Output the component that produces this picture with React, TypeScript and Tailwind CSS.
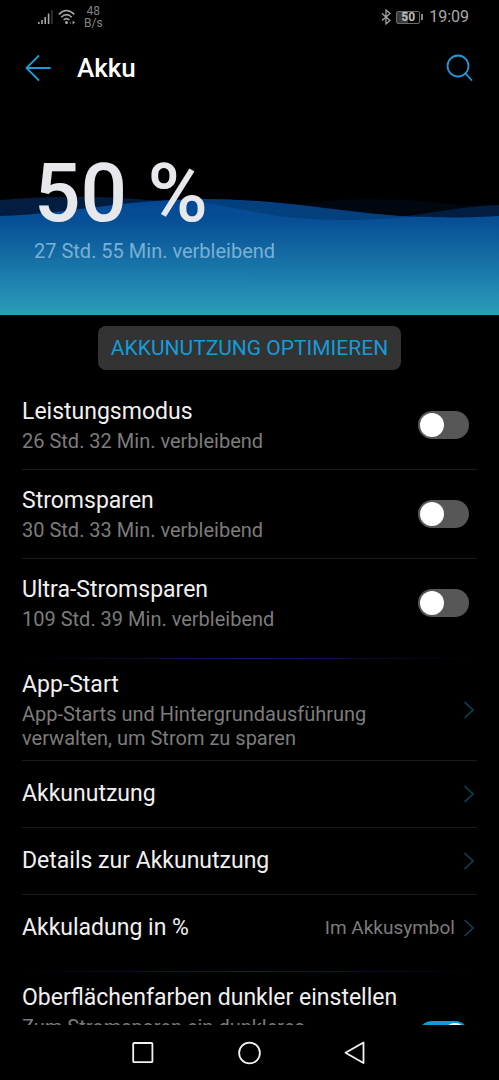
import React from "react";

interface ModeItem {
  id: string;
  title: string;
  remaining: string;
}

interface LinkItem {
  title: string;
  value?: string;
}

const modes: ModeItem[] = [
  { id: "performance", title: "Leistungsmodus", remaining: "26 Std. 32 Min. verbleibend" },
  { id: "saving", title: "Stromsparen", remaining: "30 Std. 33 Min. verbleibend" },
  { id: "ultra", title: "Ultra-Stromsparen", remaining: "109 Std. 39 Min. verbleibend" },
];

const links: LinkItem[] = [
  { title: "Akkunutzung" },
  { title: "Details zur Akkunutzung" },
  { title: "Akkuladung in %", value: "Im Akkusymbol" },
];

const titleClass = "block text-[23px] leading-[30px] text-[#f0f0f0]";
const subClass = "mt-0.5 block text-[20px] leading-6 text-[#7c7c7c]";

const Chevron = () => (
  <svg className="mr-0.5 h-5 w-3 shrink-0" viewBox="0 0 12 20" fill="none" stroke="#0b4355" strokeWidth="1.6">
    <path d="M1.5 2 L10 10 L1.5 18" />
  </svg>
);

const Toggle = ({ id, on }: { id: string; on?: boolean }) => (
  <input
    id={id}
    type="checkbox"
    role="switch"
    defaultChecked={on}
    className="mr-2 h-7 w-[51px] shrink-0 cursor-pointer appearance-none rounded-full bg-[#575757] p-0.5 before:block before:size-6 before:rounded-full before:bg-white checked:bg-[#0d9bdc] checked:before:ml-auto"
  />
);

const GlowLine = () => (
  <div className="h-px bg-linear-to-r from-transparent via-[#17176a] to-transparent" />
);

const StatusBar = () => (
  <div className="flex h-[34px] items-center justify-between pr-[30px] pl-[38px] text-[#a8a8a8]">
    <div className="flex items-center gap-1">
      <svg className="h-4 w-4" viewBox="0 0 16 16" fill="#a8a8a8">
        <rect x="0" y="13" width="1.6" height="2" />
        <rect x="3.2" y="11" width="1.6" height="4" />
        <rect x="6.4" y="8" width="1.6" height="7" />
        <rect x="9.8" y="4.5" width="1.6" height="10.5" />
        <rect x="13.2" y="1" width="1.5" height="14" fill="#3a3a3a" />
      </svg>
      <svg className="h-4 w-[18px]" viewBox="0 0 18 16" fill="none" stroke="#a8a8a8" strokeWidth="1.5">
        <path d="M0.8 5.4 Q8.5 -2.4 16.2 5.4" />
        <path d="M3.2 8.2 Q8.5 3 13.8 8.2" />
        <path d="M5.6 11 Q8.5 8.2 11.4 11" />
        <circle cx="8.5" cy="13.6" r="1.5" fill="#a8a8a8" stroke="none" />
        <path d="M12.3 12.5 V15" strokeWidth="1" stroke="#555555" />
        <path d="M14.6 11.8 L17 13.6 L14.6 15.4 Z" fill="#a8a8a8" stroke="none" />
      </svg>
      <div className="pl-1 text-center text-[12px] leading-3 text-[#858585]">
        <div>48</div>
        <div>B/s</div>
      </div>
    </div>
    <div className="flex items-center">
      <svg className="h-4 w-3" viewBox="0 0 12 16" fill="none" stroke="#a8a8a8" strokeWidth="1.2">
        <path d="M2 4.5 L10 11.5 L6 15 V1 L10 4.5 L2 11.5" />
      </svg>
      <div className="ml-1 flex h-[13px] w-6 items-center justify-center rounded-[2px] border border-[#6c6c6c] bg-linear-to-r from-[#3a3a3a] from-50% to-black to-50% text-[12px] leading-3 font-bold text-[#bdbdbd]">
        50
      </div>
      <div className="ml-px h-1.5 w-0.5 bg-[#858585]" />
      <div className="pl-1.5 text-[16px] leading-5">19:09</div>
    </div>
  </div>
);

const Header = () => (
  <header className="flex h-[68px] items-center justify-between pr-[26px] pl-6">
    <div className="flex items-center gap-[25px]">
      <button type="button" aria-label="Zurück">
        <svg className="size-7" viewBox="0 0 28 28" fill="none" stroke="#1d9bd8" strokeWidth="1.8" strokeLinecap="round" strokeLinejoin="round">
          <path d="M14.5 2 L2.5 14 L14.5 26 M2.5 14 H26" />
        </svg>
      </button>
      <h1 className="text-[26px] leading-8 font-medium text-white">Akku</h1>
    </div>
    <button type="button" aria-label="Suchen">
      <svg className="size-7" viewBox="0 0 28 28" fill="none" stroke="#1d9bd8" strokeWidth="1.8" strokeLinecap="round">
        <circle cx="13" cy="12" r="10.5" />
        <path d="M20.5 19.5 L26.5 26" />
      </svg>
    </button>
  </header>
);

const BatteryLevel = () => (
  <section className="relative h-[213px]">
    <svg className="absolute bottom-0 left-0 h-[125px] w-full" viewBox="0 0 499 125" preserveAspectRatio="none">
      <defs>
        <linearGradient id="water" x1="0" y1="0" x2="0" y2="1">
          <stop offset="0" stopColor="#034694" />
          <stop offset="0.2" stopColor="#075096" />
          <stop offset="1" stopColor="#2c9dbb" />
        </linearGradient>
      </defs>
      <path d="M300 14 C340 8 390 8 430 12 C460 15 480 17 499 19 V40 H300 Z" fill="#01070f" />
      <path d="M0 10 C60 5 110 6 160 11 C240 22 280 30 350 30 C410 30 450 16 499 15 V40 H0 Z" fill="#021d3f" />
      <path d="M0 26 C70 24 120 10 200 9 C300 9 350 27 430 27 C460 28 480 27 499 26 V125 H0 Z" fill="url(#water)" />
      <path d="M190 10 C270 8 330 20 410 27 C370 30 310 34 250 21 C230 17 210 13 190 10 Z" fill="#043c78" fillOpacity="0.8" />
    </svg>
    <div className="relative pt-[47px] pl-[34px]">
      <div className="text-[82px] leading-[88px] font-medium text-[#e6e8ec]">50 %</div>
      <p className="text-[20px] leading-7 text-[#79b0d6]">27 Std. 55 Min. verbleibend</p>
    </div>
  </section>
);

const NavBar = () => (
  <nav className="flex h-[55px] shrink-0 items-center justify-center gap-[82px]">
    <button type="button" aria-label="Übersicht">
      <svg className="size-6" viewBox="0 0 24 24" fill="none" stroke="#f2f2f2" strokeWidth="1.8">
        <rect x="1.2" y="2" width="19.2" height="19.2" rx="1" />
      </svg>
    </button>
    <button type="button" aria-label="Startseite">
      <svg className="size-6" viewBox="0 0 24 24" fill="none" stroke="#f2f2f2" strokeWidth="1.8">
        <circle cx="11.5" cy="12" r="10.4" />
      </svg>
    </button>
    <button type="button" aria-label="Zurück">
      <svg className="size-6" viewBox="0 0 24 24" fill="none" stroke="#f2f2f2" strokeWidth="1.8" strokeLinejoin="round">
        <path d="M19.5 1.5 V22 L1.5 11.8 Z" />
      </svg>
    </button>
  </nav>
);

export default function App() {
  return (
    <div className="flex h-screen flex-col bg-black font-['Roboto','Liberation_Sans',sans-serif]">
      <StatusBar />
      <Header />
      <main className="min-h-0 flex-1 overflow-y-auto [scrollbar-width:none]">
        <BatteryLevel />
        <div className="my-[11px] flex justify-center">
          <button type="button" className="rounded-lg bg-[#333333] px-[13px] py-2 text-[21px] leading-7 text-[#159bd9]">
            AKKUNUTZUNG OPTIMIEREN
          </button>
        </div>
        <div className="px-[22px]">
          {modes.map((mode) => (
            <div
              key={mode.id}
              className="flex items-center justify-between border-b border-[#1b1b1b] py-4 last:border-transparent"
            >
              <label htmlFor={mode.id}>
                <span className={titleClass}>{mode.title}</span>
                <span className={subClass}>{mode.remaining}</span>
              </label>
              <Toggle id={mode.id} />
            </div>
          ))}
        </div>
        <div className="mt-2.5 px-[22px]">
          <GlowLine />
          <a href="#app-start" className="flex items-center justify-between border-b border-[#1b1b1b] pt-[11px] pb-2.5">
            <span className="max-w-[380px]">
              <span className={titleClass}>App-Start</span>
              <span className={subClass}>App-Starts und Hintergrundausführung verwalten, um Strom zu sparen</span>
            </span>
            <Chevron />
          </a>
          {links.map((link) => (
            <a
              key={link.title}
              href="#akku"
              className="flex items-center justify-between border-b border-[#1b1b1b] py-[18px] last:border-transparent"
            >
              <span className={titleClass}>{link.title}</span>
              <span className="flex items-center gap-2 text-[19px] leading-6 text-[#7c7c7c]">
                {link.value}
                <Chevron />
              </span>
            </a>
          ))}
        </div>
        <div className="mt-[9px] px-[22px]">
          <GlowLine />
          <div className="flex items-center justify-between py-[11px]">
            <label htmlFor="dark">
              <span className={titleClass}>Oberflächenfarben dunkler einstellen</span>
              <span className={`${subClass} max-w-[300px]`}>
                Zum Stromsparen ein dunkleres Farbschema für die Benutzeroberfläche verwenden
              </span>
            </label>
            <Toggle id="dark" on />
          </div>
        </div>
      </main>
      <NavBar />
    </div>
  );
}
